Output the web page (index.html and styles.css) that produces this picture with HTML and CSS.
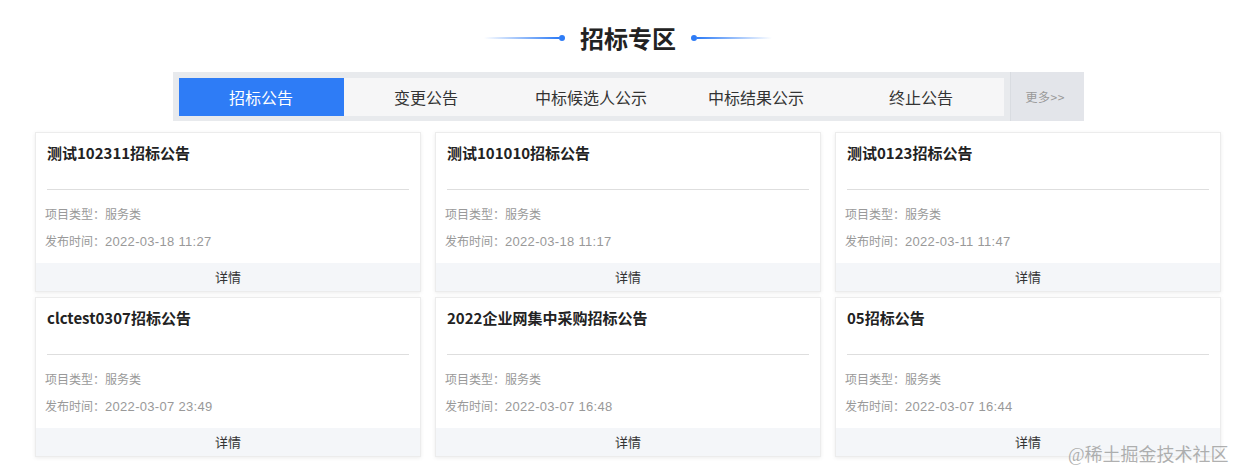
FILE: index.html
```html
<!DOCTYPE html>
<html lang="zh-CN">
<head>
<meta charset="utf-8">
<title>招标专区</title>
<link rel="stylesheet" href="styles.css">
</head>
<body>
<div class="page">
  <div class="heading">
    <span class="line line-left"></span>
    <span class="dot"></span>
    <h1 class="heading-text">招标专区</h1>
    <span class="dot"></span>
    <span class="line line-right"></span>
  </div>

  <div class="tabbar">
    <div class="tabs">
      <div class="tab active">招标公告</div>
      <div class="tab">变更公告</div>
      <div class="tab">中标候选人公示</div>
      <div class="tab">中标结果公示</div>
      <div class="tab">终止公告</div>
    </div>
    <div class="more">更多&gt;&gt;</div>
  </div>

  <div class="cards">
    <div class="card">
      <div class="card-title">测试102311招标公告</div>
      <div class="card-meta">
        <div>项目类型：服务类</div>
        <div>发布时间：<span class="num">2022-03-18 11:27</span></div>
      </div>
      <div class="card-foot">详情</div>
    </div>
    <div class="card">
      <div class="card-title">测试101010招标公告</div>
      <div class="card-meta">
        <div>项目类型：服务类</div>
        <div>发布时间：<span class="num">2022-03-18 11:17</span></div>
      </div>
      <div class="card-foot">详情</div>
    </div>
    <div class="card">
      <div class="card-title">测试0123招标公告</div>
      <div class="card-meta">
        <div>项目类型：服务类</div>
        <div>发布时间：<span class="num">2022-03-11 11:47</span></div>
      </div>
      <div class="card-foot">详情</div>
    </div>
    <div class="card">
      <div class="card-title">clctest0307招标公告</div>
      <div class="card-meta">
        <div>项目类型：服务类</div>
        <div>发布时间：<span class="num">2022-03-07 23:49</span></div>
      </div>
      <div class="card-foot">详情</div>
    </div>
    <div class="card">
      <div class="card-title">2022企业网集中采购招标公告</div>
      <div class="card-meta">
        <div>项目类型：服务类</div>
        <div>发布时间：<span class="num">2022-03-07 16:48</span></div>
      </div>
      <div class="card-foot">详情</div>
    </div>
    <div class="card">
      <div class="card-title">05招标公告</div>
      <div class="card-meta">
        <div>项目类型：服务类</div>
        <div>发布时间：<span class="num">2022-03-07 16:44</span></div>
      </div>
      <div class="card-foot">详情</div>
    </div>
  </div>
</div>
<div class="watermark">@稀土掘金技术社区</div>
</body>
</html>
```
FILE: styles.css
```css
* { box-sizing: border-box; }
html, body { margin: 0; padding: 0; background: #fff; }
body {
  font-family: "Noto Sans CJK SC", "Noto Sans", sans-serif;
  color: #333;
  width: 1234px;
  height: 472px;
  overflow: hidden;
  position: relative;
}
.page {
  width: 1186px;
  margin-left: 35px;
  padding-top: 18px;
}
.heading {
  display: flex;
  align-items: center;
  justify-content: center;
  height: 40px;
}
.heading-text {
  margin: 0 15px;
  font-size: 24px;
  font-weight: 700;
  line-height: 40px;
  color: #222;
}
.line {
  display: block;
  width: 75px;
  height: 2px;
}
.line-left { background: linear-gradient(to right, rgba(46,124,246,0), #2e7cf6); }
.line-right { background: linear-gradient(to left, rgba(46,124,246,0), #2e7cf6); }
.dot {
  display: block;
  width: 6px;
  height: 6px;
  border-radius: 50%;
  background: #2e7cf6;
}
.tabbar {
  width: 911px;
  margin: 14px auto 0;
  height: 49px;
  display: flex;
  background: #e8eaed;
}
.tabs {
  display: flex;
  margin: 6px 0 5px 6px;
  background: #f6f6f7;
}
.tab {
  width: 165px;
  height: 38px;
  line-height: 38px;
  text-align: center;
  font-size: 16px;
  color: #333;
}
.tab.active {
  background: #2e7cf6;
  color: #fff;
}
.more {
  margin-left: 6px;
  flex: 1;
  border-left: 1px solid #d9dce1;
  background: #e3e5ea;
  font-size: 12px;
  color: #999;
  line-height: 49px;
  padding-left: 15px;
  letter-spacing: 0.5px;
}
.cards {
  margin-top: 11px;
  display: grid;
  grid-template-columns: repeat(3, 386px);
  column-gap: 14px;
  row-gap: 5px;
}
.card {
  height: 160px;
  background: #fff;
  border: 1px solid #ececec;
  box-shadow: 0 1px 4px rgba(0,0,0,0.08);
  display: flex;
  flex-direction: column;
}
.card-title {
  margin: 0 11px;
  height: 57px;
  padding-top: 9px;
  font-size: 15px;
  font-weight: 700;
  line-height: 22px;
  color: #222;
  border-bottom: 1px solid #dedede;
}
.card-meta {
  padding: 10px 9px 0;
  font-size: 12px;
  line-height: 27px;
  color: #999;
  flex: 1;
}
.num {
  font-family: "Liberation Sans", "Noto Sans", sans-serif;
  font-size: 13px;
  letter-spacing: 0.3px;
}
.card-foot {
  height: 28px;
  line-height: 28px;
  background: #f4f6f9;
  text-align: center;
  font-size: 13px;
  color: #333;
}
.watermark {
  position: absolute;
  left: 1068px;
  top: 443px;
  font-family: "Liberation Serif", "Noto Sans CJK SC", serif;
  font-size: 18px;
  line-height: 24px;
  color: rgba(150,150,150,0.75);
}
```
